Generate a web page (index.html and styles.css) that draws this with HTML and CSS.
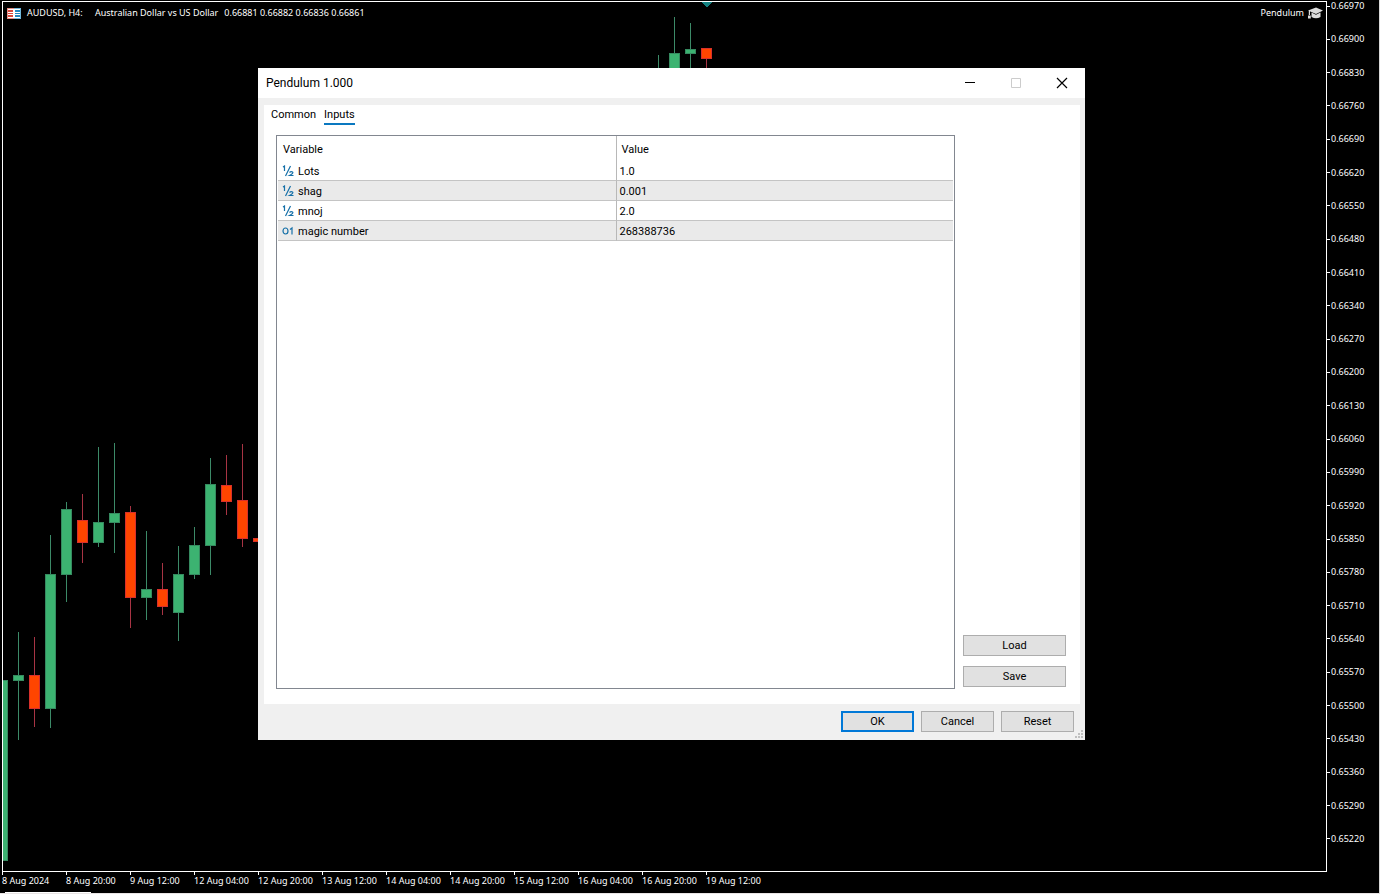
FILE: index.html
```html
<!DOCTYPE html>
<html lang="en">
<head>
<meta charset="utf-8">
<title>AUDUSD, H4</title>
<link rel="stylesheet" href="styles.css">
</head>
<body>
<main class="terminal">
  <section class="plot" aria-label="AUDUSD chart">
    <svg class="candles" aria-hidden="true">
      <g transform="translate(-3 -2)" shape-rendering="crispEdges">
        <path class="wick-up" d="M18.500 632V740M50.500 535V728M66.500 502V602M98.500 447V547M114.500 443V553M146.500 531V620M178.500 546V641M194.500 527V579M210.500 458V575M658.500 55V70M674.500 17V70M690.500 23V70"/>
        <path class="wick-down" d="M34.500 637V727M82.500 494V563M130.500 506V628M162.500 563V615M226.500 455V515M242.500 444V547M706.500 48V70"/>
        <g class="up">
          <rect x="-2.500" y="680.500" width="10" height="180"/>
          <rect x="13.500" y="675.500" width="10" height="5"/>
          <rect x="45.500" y="574.500" width="10" height="134"/>
          <rect x="61.500" y="509.500" width="10" height="65"/>
          <rect x="93.500" y="522.500" width="10" height="20"/>
          <rect x="109.500" y="513.500" width="10" height="9"/>
          <rect x="141.500" y="589.500" width="10" height="8"/>
          <rect x="173.500" y="574.500" width="10" height="38"/>
          <rect x="189.500" y="545.500" width="10" height="29"/>
          <rect x="205.500" y="484.500" width="10" height="61"/>
          <rect x="669.500" y="53.500" width="10" height="20"/>
          <rect x="685.500" y="49.500" width="10" height="4"/>
        </g>
        <g class="down">
          <rect x="29.500" y="675.500" width="10" height="33"/>
          <rect x="77.500" y="520.500" width="10" height="22"/>
          <rect x="125.500" y="512.500" width="10" height="85"/>
          <rect x="157.500" y="589.500" width="10" height="17"/>
          <rect x="221.500" y="485.500" width="10" height="16"/>
          <rect x="237.500" y="500.500" width="10" height="38"/>
          <rect x="253.500" y="538.500" width="10" height="3"/>
          <rect x="701.500" y="48.500" width="10" height="10"/>
        </g>
        <path class="marker" d="M701 2H712L706.500 7.500Z"/>
      </g>
    </svg>
    <header class="plot-head">
      <svg class="book" viewBox="0 0 14 11" shape-rendering="crispEdges" aria-hidden="true">
        <path fill="#fff" d="M0 0H14V11H0Z"/>
        <path fill="#e88a80" d="M0 0H7V1H1V10H7V11H0Z"/>
        <path fill="#d8483c" d="M1 2H6V4H1ZM1 5H6V6H1ZM1 7H6V9H1Z"/>
        <path fill="#70b8dc" d="M7 0H14V11H7V10H13V1H7Z"/>
        <path fill="#2488c0" d="M8 2H13V4H8ZM8 5H13V6H8ZM8 7H13V9H8Z"/>
      </svg>
      <span class="symbol">AUDUSD, H4:</span>
      <span class="pair">Australian Dollar vs US Dollar</span>
      <span>0.66881 0.66882 0.66836 0.66861</span>
      <span class="expert">Pendulum
        <svg class="cap" viewBox="0 0 15 12" aria-hidden="true">
          <path fill="#ddd" d="M0 3.500 8 .5l7 3L8 7ZM3.500 5.500 8 7.800 12.500 5.500V10Q8 12.500 3.500 10ZM.8 4H2V8H.8ZM0 8.500H2.800V11.500H0Z"/>
        </svg>
      </span>
    </header>
  </section>

  <ol class="prices">
    <li>0.66970</li><li>0.66900</li><li>0.66830</li><li>0.66760</li><li>0.66690</li><li>0.66620</li><li>0.66550</li><li>0.66480</li><li>0.66410</li><li>0.66340</li><li>0.66270</li><li>0.66200</li><li>0.66130</li><li>0.66060</li><li>0.65990</li><li>0.65920</li><li>0.65850</li><li>0.65780</li><li>0.65710</li><li>0.65640</li><li>0.65570</li><li>0.65500</li><li>0.65430</li><li>0.65360</li><li>0.65290</li><li>0.65220</li>
  </ol>

  <ol class="times">
    <li>8 Aug 2024</li><li>8 Aug 20:00</li><li>9 Aug 12:00</li><li>12 Aug 04:00</li><li>12 Aug 20:00</li><li>13 Aug 12:00</li><li>14 Aug 04:00</li><li>14 Aug 20:00</li><li>15 Aug 12:00</li><li>16 Aug 04:00</li><li>16 Aug 20:00</li><li>19 Aug 12:00</li>
  </ol>
  <div class="sheet-tab"></div>
</main>

<section class="dialog" role="dialog" aria-labelledby="dialog-title">
  <header class="titlebar">
    <h1 id="dialog-title">Pendulum 1.000</h1>
    <button class="win-btn" type="button" aria-label="Minimize"><svg viewBox="0 0 10 10"><path d="M0 4.500H10"/></svg></button>
    <button class="win-btn off" type="button" aria-label="Maximize" disabled><svg viewBox="0 0 10 10"><path d="M.5.500H9.500V9.500H.5Z"/></svg></button>
    <button class="win-btn cross" type="button" aria-label="Close"><svg viewBox="0 0 10 10"><path d="M0 0 10 10M10 0 0 10"/></svg></button>
  </header>
  <div class="page">
    <nav class="tabs">
      <button type="button">Common</button>
      <button class="active" type="button">Inputs</button>
    </nav>
    <div class="content">
      <div class="grid-box">
        <table class="inputs">
          <thead><tr><th>Variable</th><th>Value</th></tr></thead>
          <tbody>
            <tr><td><svg class="kind" viewBox="0 0 12 12" aria-hidden="true"><path d="M1 2 2.500 1V6M8.500 1 3.500 11M7.500 7.500Q9 6 10.500 7T7.500 10.500H11.500"/></svg>Lots</td><td>1.0</td></tr>
            <tr><td><svg class="kind" viewBox="0 0 12 12" aria-hidden="true"><path d="M1 2 2.500 1V6M8.500 1 3.500 11M7.500 7.500Q9 6 10.500 7T7.500 10.500H11.500"/></svg>shag</td><td>0.001</td></tr>
            <tr><td><svg class="kind" viewBox="0 0 12 12" aria-hidden="true"><path d="M1 2 2.500 1V6M8.500 1 3.500 11M7.500 7.500Q9 6 10.500 7T7.500 10.500H11.500"/></svg>mnoj</td><td>2.0</td></tr>
            <tr><td><svg class="kind" viewBox="0 0 12 12" aria-hidden="true"><ellipse cx="3.500" cy="6" rx="2.500" ry="3"/><path d="M8 4.500 10 3V9.500"/></svg>magic number</td><td>268388736</td></tr>
          </tbody>
        </table>
      </div>
      <div class="side">
        <button class="btn" type="button">Load</button>
        <button class="btn" type="button">Save</button>
      </div>
    </div>
  </div>
  <footer class="actions">
    <button class="btn primary" type="button">OK</button>
    <button class="btn" type="button">Cancel</button>
    <button class="btn" type="button">Reset</button>
    <svg class="grip" viewBox="0 0 8 8" aria-hidden="true"><path d="M6 0h2v2H6ZM3 3h2v2H3ZM6 3h2v2H6ZM0 6h2v2H0ZM3 6h2v2H3ZM6 6h2v2H6Z"/></svg>
  </footer>
</section>
</body>
</html>
```
FILE: styles.css
```css
* { box-sizing: border-box; }

html, body { height: 100%; margin: 0; }

body {
  position: relative;
  overflow: hidden;
  background: #000;
  color: #fff;
  font: 9px/12px "Noto Sans", sans-serif;
}

ol { margin: 0; padding: 0; list-style: none; }
button { font: inherit; color: inherit; }

/* Chart */
.terminal {
  display: grid;
  grid-template: minmax(0, 1fr) 19px 2px / minmax(0, 1fr) 52px;
  height: 100%;
  border-right: 1px solid #d8d8d8;
  border-bottom: 1px solid #e8e4e4;
}

.plot {
  position: relative;
  margin: 1px 0 0 2px;
  border: 1px solid #fff;
}

.candles { position: absolute; inset: 0; width: 100%; height: 100%; }
.candles path { fill: none; }
.wick-up { stroke: #3c8a68; }
.wick-down { stroke: #a83444; }
.up { fill: #3cb371; stroke: #368a60; }
.down { fill: #ff4500; stroke: #d8302c; }
.candles .marker { fill: #128080; }

.plot-head {
  position: relative;
  display: flex;
  align-items: center;
  gap: 6px;
  padding: 5px 3px 0 4px;
  white-space: nowrap;
}
.book { width: 14px; height: 11px; }
.symbol { min-width: 62px; }
.expert { display: flex; align-items: center; gap: 4px; margin-left: auto; }
.cap { width: 15px; height: 12px; }

.prices {
  display: flex;
  flex-direction: column;
  justify-content: space-between;
  padding-bottom: 27px;
}
.prices li { display: flex; align-items: center; gap: 1px; }
.prices li::before { content: ""; width: 3px; height: 1px; background: #fff; }

.times { display: flex; grid-column: 1 / 3; padding-left: 2px; }
.times li { width: 64px; white-space: nowrap; }
.times li::before { content: ""; display: block; width: 1px; height: 3px; background: #fff; }

.sheet-tab { width: 86px; height: 1px; margin: 1px 0 0 5px; background: #fff; }

/* Dialog window */
.dialog {
  position: absolute;
  inset: 68px 295px 154px 258px;
  display: flex;
  flex-direction: column;
  background: #f0f0f0;
  color: #000;
  font-family: Roboto, sans-serif;
  font-size: 11px;
  line-height: 14px;
}

.titlebar { display: flex; align-items: center; height: 30px; padding-left: 8px; background: #fff; }
.titlebar h1 { margin: 0 auto 0 0; font-size: 12px; font-weight: 400; }
.win-btn { display: grid; place-items: center; width: 46px; height: 28px; padding: 0; border: 0; background: none; }
.win-btn svg { width: 10px; height: 10px; fill: none; stroke: #000; }
.off svg { stroke: #ccc; }
.cross svg { stroke-width: 1.2; overflow: visible; }

.page {
  display: flex;
  flex: 1;
  flex-direction: column;
  min-height: 0;
  margin: 7px 5px 0 6px;
  padding: 1px 14px 15px 7px;
  background: #fff;
}

.tabs { display: flex; gap: 8px; }
.tabs button { padding: 2px 0 1px; border: 0; border-bottom: 2px solid transparent; background: none; }
.tabs .active { border-color: #0a78c0; }

.content { display: flex; flex: 1; gap: 8px; min-height: 0; margin: 10px 0 0 5px; }
.grid-box { flex: 1; padding: 0 1px; border: 1px solid #828790; }

.inputs { width: 100%; table-layout: fixed; border-collapse: separate; border-spacing: 0; }
.inputs th { height: 25px; padding: 2px 5px 0; font-weight: 400; text-align: left; }
.inputs th:first-child { width: calc(50% - 2px); }
.inputs td { height: 20px; padding: 2px 3px 0; border-bottom: 1px solid #c4c4c4; }
.inputs tr > :nth-child(2) { border-left: 1px solid #b8b8b8; }
.inputs td:first-child { padding-left: 4px; }
.inputs tbody tr:nth-child(even) { background: #eaeaea; }
.kind { width: 12px; height: 12px; margin-right: 4px; vertical-align: -2px; fill: none; stroke: #1670a8; stroke-width: 1.2; }

.btn { width: 73px; height: 21px; padding: 1px 0 0; border: 1px solid #adadad; background: #e1e1e1; }
.primary { border: 2px solid #0078d7; }
.side { display: flex; flex-direction: column; justify-content: flex-end; gap: 10px; padding-bottom: 2px; }
.side .btn { width: 103px; }

.actions { position: relative; display: flex; justify-content: flex-end; gap: 7px; padding: 7px 11px 8px; }
.grip { position: absolute; right: 2px; bottom: 2px; width: 8px; height: 8px; fill: #bfbfbf; }
```
